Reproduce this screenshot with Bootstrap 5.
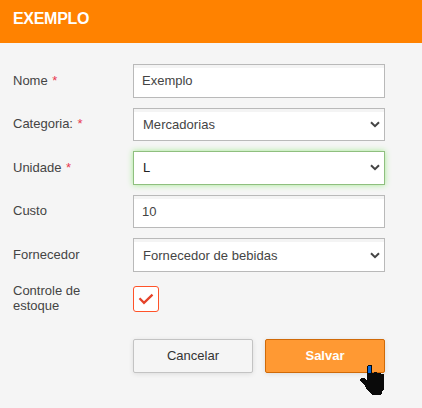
<!DOCTYPE html>
<html lang="pt-BR">
<head>
<meta charset="utf-8">
<meta name="viewport" content="width=device-width, initial-scale=1">
<title>Exemplo</title>
<link href="https://cdn.jsdelivr.net/npm/bootstrap@5.3.0/dist/css/bootstrap.min.css" rel="stylesheet">
<style>
body{background:#f5f5f5;color:#444;font:13px/15px "Liberation Sans",Arial,sans-serif;height:408px;overflow:hidden}
.topbar{background:#ff8200;height:43px;padding:0 13px 6px}
.topbar h1{font-size:16px;line-height:18px;letter-spacing:-.3px}
.product-form{width:385px;padding:21px 0 0 13px}
.field-row{height:43.6px}
.field-label{width:120px;flex:none;padding-top:8.6px}
.req{color:#e8384f;margin-left:1px}
.field-box{border:1px solid #b9b9b9;border-radius:0;background-color:#fff;box-shadow:inset 0 3px 0 #f4f4f4;height:33.6px;padding:0 8px;font-size:13px;line-height:15px;color:#444}
.field-box:focus{border-color:#b9b9b9}
select.field-box{padding:0 28px 0 9px;letter-spacing:.04px;background:#fff url("data:image/svg+xml,%3Csvg xmlns='http://www.w3.org/2000/svg' viewBox='0 0 10 7'%3E%3Cpath d='M1 1.2 5 5.2 9 1.2' fill='none' stroke='%23444' stroke-width='2'/%3E%3C/svg%3E") no-repeat right 4px center/10px 7px}
.field-box.active-field{border-color:#8fbf7f;box-shadow:0 0 6px #a5eb93;color:#222}
.tick-box{width:26px;height:26px;border:1px solid #ff5329;border-radius:3px;background:#fff;margin-top:4px}
.label-two{padding-top:1px}
.actions{margin:10px 0 0 120px;gap:12px}
.actions .btn{width:120px;height:34px;padding:0;border-radius:2px;font-size:13px;line-height:15px;box-shadow:0 1px 5px rgba(0,0,0,.1)}
.btn-cancel{background:#f5f5f5!important;border-color:#c3c3c3!important;color:#333!important}
.btn-save{background:#ff9933!important;border-color:#d06a08!important;color:#fff!important}
.hand{left:360px;top:365px;z-index:2}
</style>
<script src="https://cdn.jsdelivr.net/npm/bootstrap@5.3.0/dist/js/bootstrap.bundle.min.js"></script>
</head>
<body class="position-relative">
<header class="topbar d-flex align-items-center text-white"><h1 class="fw-bold m-0">EXEMPLO</h1></header>
<form class="product-form">
<div class="field-row d-flex"><label class="field-label" for="nome">Nome <span class="req">*</span></label><input id="nome" class="form-control field-box" value="Exemplo"></div>
<div class="field-row d-flex"><label class="field-label" for="categoria">Categoria: <span class="req">*</span></label><select id="categoria" class="form-select field-box"><option>Mercadorias</option></select></div>
<div class="field-row d-flex"><label class="field-label" for="unidade">Unidade <span class="req">*</span></label><select id="unidade" class="form-select field-box active-field"><option>L</option></select></div>
<div class="field-row d-flex"><label class="field-label" for="custo">Custo</label><input id="custo" class="form-control field-box" value="10"></div>
<div class="field-row d-flex"><label class="field-label" for="fornecedor">Fornecedor</label><select id="fornecedor" class="form-select field-box"><option>Fornecedor de bebidas</option></select></div>
<div class="d-flex pb-3"><div class="field-label label-two">Controle de<br>estoque</div><div class="tick-box d-flex align-items-center justify-content-center" role="checkbox" aria-checked="true" aria-label="Controle de estoque"><svg width="16" height="12" viewBox="0 0 16 12"><path d="M1.5 5.3 6 9.8 14.5 1.7" fill="none" stroke="#e5432a" stroke-width="2.3"/></svg></div></div>
<div class="actions d-flex"><button type="button" class="btn btn-cancel">Cancelar</button><button type="button" class="btn btn-save fw-bold">Salvar</button></div>
</form>
<svg class="hand position-absolute" width="25" height="30" viewBox="0 0 25 30" shape-rendering="crispEdges"><path d="M7 1 8 0h3l1 1v7l4-1 1 1h3l1 1h2l1 1v14l-2 3v2l-2 1h-7l-2-1-5-6-1-3-5-4v-2l1-1h3l3 2z" fill="#0a0a0a"/><path d="M8 1h3v7H8z" fill="#0868d8"/></svg>
</body>
</html>
